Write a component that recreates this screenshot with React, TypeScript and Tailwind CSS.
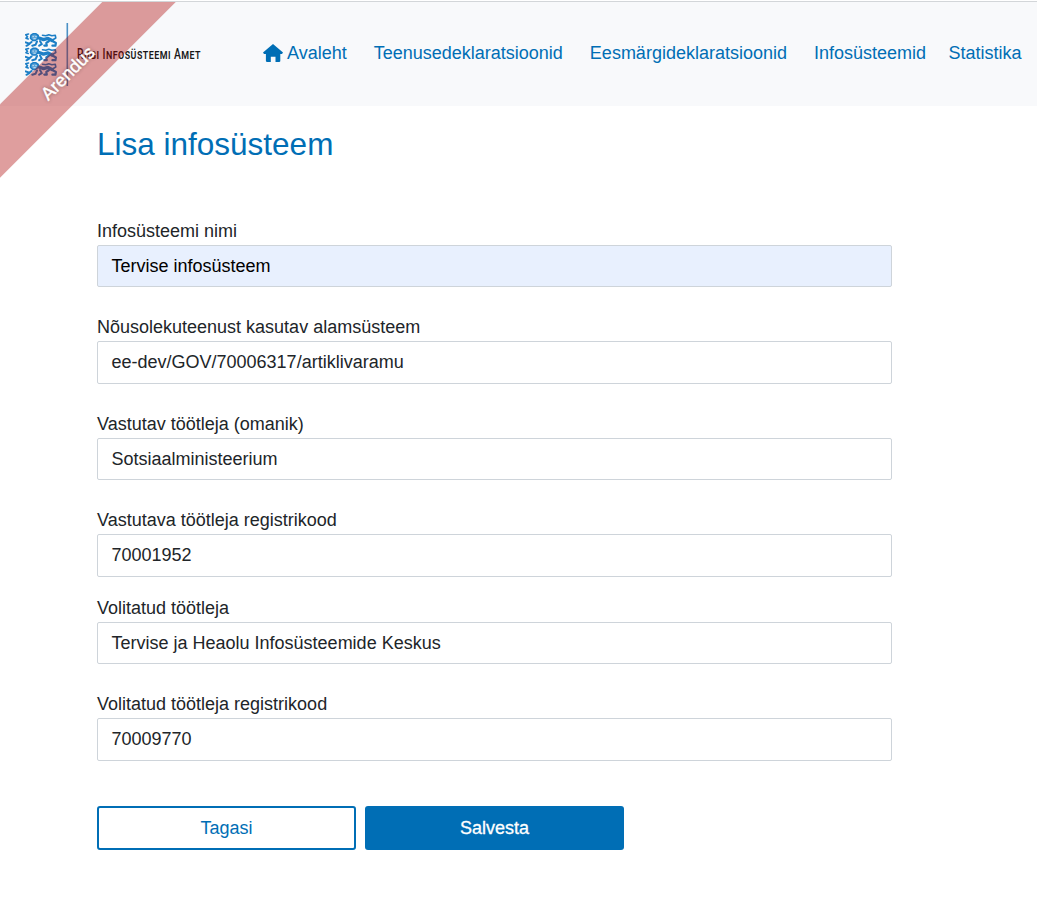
import React from "react";

const navItems = [
  { label: "Teenusedeklaratsioonid", gap: "ml-[27px]" },
  { label: "Eesmärgideklaratsioonid", gap: "ml-[27px]" },
  { label: "Infosüsteemid", gap: "ml-[27px]" },
  { label: "Statistika", gap: "ml-[22.5px]" },
];

const fields = [
  { label: "Infosüsteemi nimi", value: "Tervise infosüsteem", row: "h-[96px]", box: "h-[42px] bg-[#e8f0fe] text-black" },
  { label: "Nõusolekuteenust kasutav alamsüsteem", value: "ee-dev/GOV/70006317/artiklivaramu", row: "h-[97px]", box: "h-[43px] bg-white" },
  { label: "Vastutav töötleja (omanik)", value: "Sotsiaalministeerium", row: "h-[96px]", box: "h-[42px] bg-white" },
  { label: "Vastutava töötleja registrikood", value: "70001952", row: "h-[88px]", box: "h-[43px] bg-white" },
  { label: "Volitatud töötleja", value: "Tervise ja Heaolu Infosüsteemide Keskus", row: "h-[96px]", box: "h-[42px] bg-white" },
  { label: "Volitatud töötleja registrikood", value: "70009770", row: "h-[97px]", box: "h-[43px] bg-white" },
];

function Lion({ y }: { y: number }) {
  return (
    <g transform={`translate(-.5 ${y})`} fill="none" stroke="#1d7fc6" strokeLinecap="round" strokeLinejoin="round">
      <path d="M4 1 1.2 1.8 3 3.8 1.5 5.2l2.2.8" strokeWidth="1.6" />
      <path d="M6.5 2.2 8.5.8h3l2.2 1.7-.2 3L11 7.5H8.2L6 5.2z" fill="#5ca4d8" strokeWidth="1.6" />
      <path d="M8.4 3.6h.6m2.2 0h.6M9.3 5.7h1.6" stroke="#e5f0f8" strokeWidth=".8" />
      <path d="M14.5 5 19 6.6l4.5-1.2 4 2" strokeWidth="3.4" />
      <path d="M28 7l3.3-2-.5-2.7-3.5.4-3-1-3 1.1-3.3-.6" strokeWidth="1.6" />
      <path d="M7 9 4.8 10.8 1.2 9.4M5 11 2 12.8M12.5 8.5 11 11.8l-3.2.9M15.5 8l1.8 3.2-2.6 1.5" strokeWidth="2" />
      <path d="M24.5 8 21.8 10l.5 2.6h-2.5M28 8l3.4 2-.5 2.7h-3" strokeWidth="2.2" />
    </g>
  );
}

function Logo() {
  return (
    <svg className="block h-[70px] w-[180px] shrink-0" viewBox="0 0 180 70" role="img" aria-label="Riigi Infosüsteemi Amet">
      <Lion y={11} />
      <Lion y={25.5} />
      <Lion y={40} />
      <path d="M42.3 1v63" stroke="#4b91c5" strokeWidth="1.6" />
      <text
        transform="translate(52 37.4) scale(.74 1)"
        textLength="167"
        lengthAdjust="spacing"
        fill="#171717"
        className="font-['Roboto',sans-serif] text-[14px] font-medium [font-variant:small-caps]"
      >
        Riigi Infosüsteemi Amet
      </text>
    </svg>
  );
}

export default function App() {
  return (
    <div className="relative h-[898px] w-[1037px] overflow-hidden bg-white pt-px font-['Liberation_Sans',Arial,sans-serif] text-[18px] text-[#212529]">
      <header className="flex h-[105px] items-start border-t border-[#d3d6d9] bg-[#f8f9fb] pl-[25px]">
        <div className="mt-5 flex">
          <Logo />
        </div>
        <nav className="mt-[37px] ml-[58px] flex h-7 items-center whitespace-nowrap text-[#006eb5]">
          <a className="flex items-center">
            <svg className="mr-1 h-[18px] w-5" viewBox="0 0 20 18" fill="currentColor" aria-hidden="true">
              <path d="M10 0 20 8.5 19 10h-1.7v7.2l-.8.8h-4v-5.2H7.8V18h-4l-.9-.8V10H1L0 8.5z" />
            </svg>
            Avaleht
          </a>
          {navItems.map((item) => (
            <a key={item.label} className={item.gap}>{item.label}</a>
          ))}
        </nav>
      </header>

      <main className="w-[892px] pl-[97px]">
        <h1 className="pt-[18px] text-[31.5px] leading-10 text-[#006eb5]">Lisa infosüsteem</h1>
        <form className="pt-[53px]">
          {fields.map((field) => (
            <div key={field.label} className={field.row}>
              <label className="block h-7 leading-7">{field.label}</label>
              <div className={`flex items-center rounded-[2px] border border-[#ced4da] pl-[13.5px] ${field.box}`}>{field.value}</div>
            </div>
          ))}
          <div className="flex gap-[9px] pt-[19px]">
            <button type="button" className="h-11 w-[259px] rounded-[3px] border-2 border-[#006eb5] bg-white text-[#006eb5]">Tagasi</button>
            <button type="button" className="h-11 w-[259px] rounded-[3px] bg-[#006eb5] text-white [-webkit-text-stroke:.3px_white]">Salvesta</button>
          </div>
        </form>
      </main>

      <div className="pointer-events-none absolute top-[2px] left-0 h-[190px] w-[190px] overflow-hidden">
        <div className="absolute top-[42px] left-[-79px] flex h-[52px] w-[300px] -rotate-45 items-center justify-center bg-[#aa0000]/38 pr-[9px] text-white [text-shadow:0_0_4px_rgba(0,0,0,.45)] [-webkit-text-stroke:.4px_white]">
          Arendus
        </div>
      </div>
    </div>
  );
}
